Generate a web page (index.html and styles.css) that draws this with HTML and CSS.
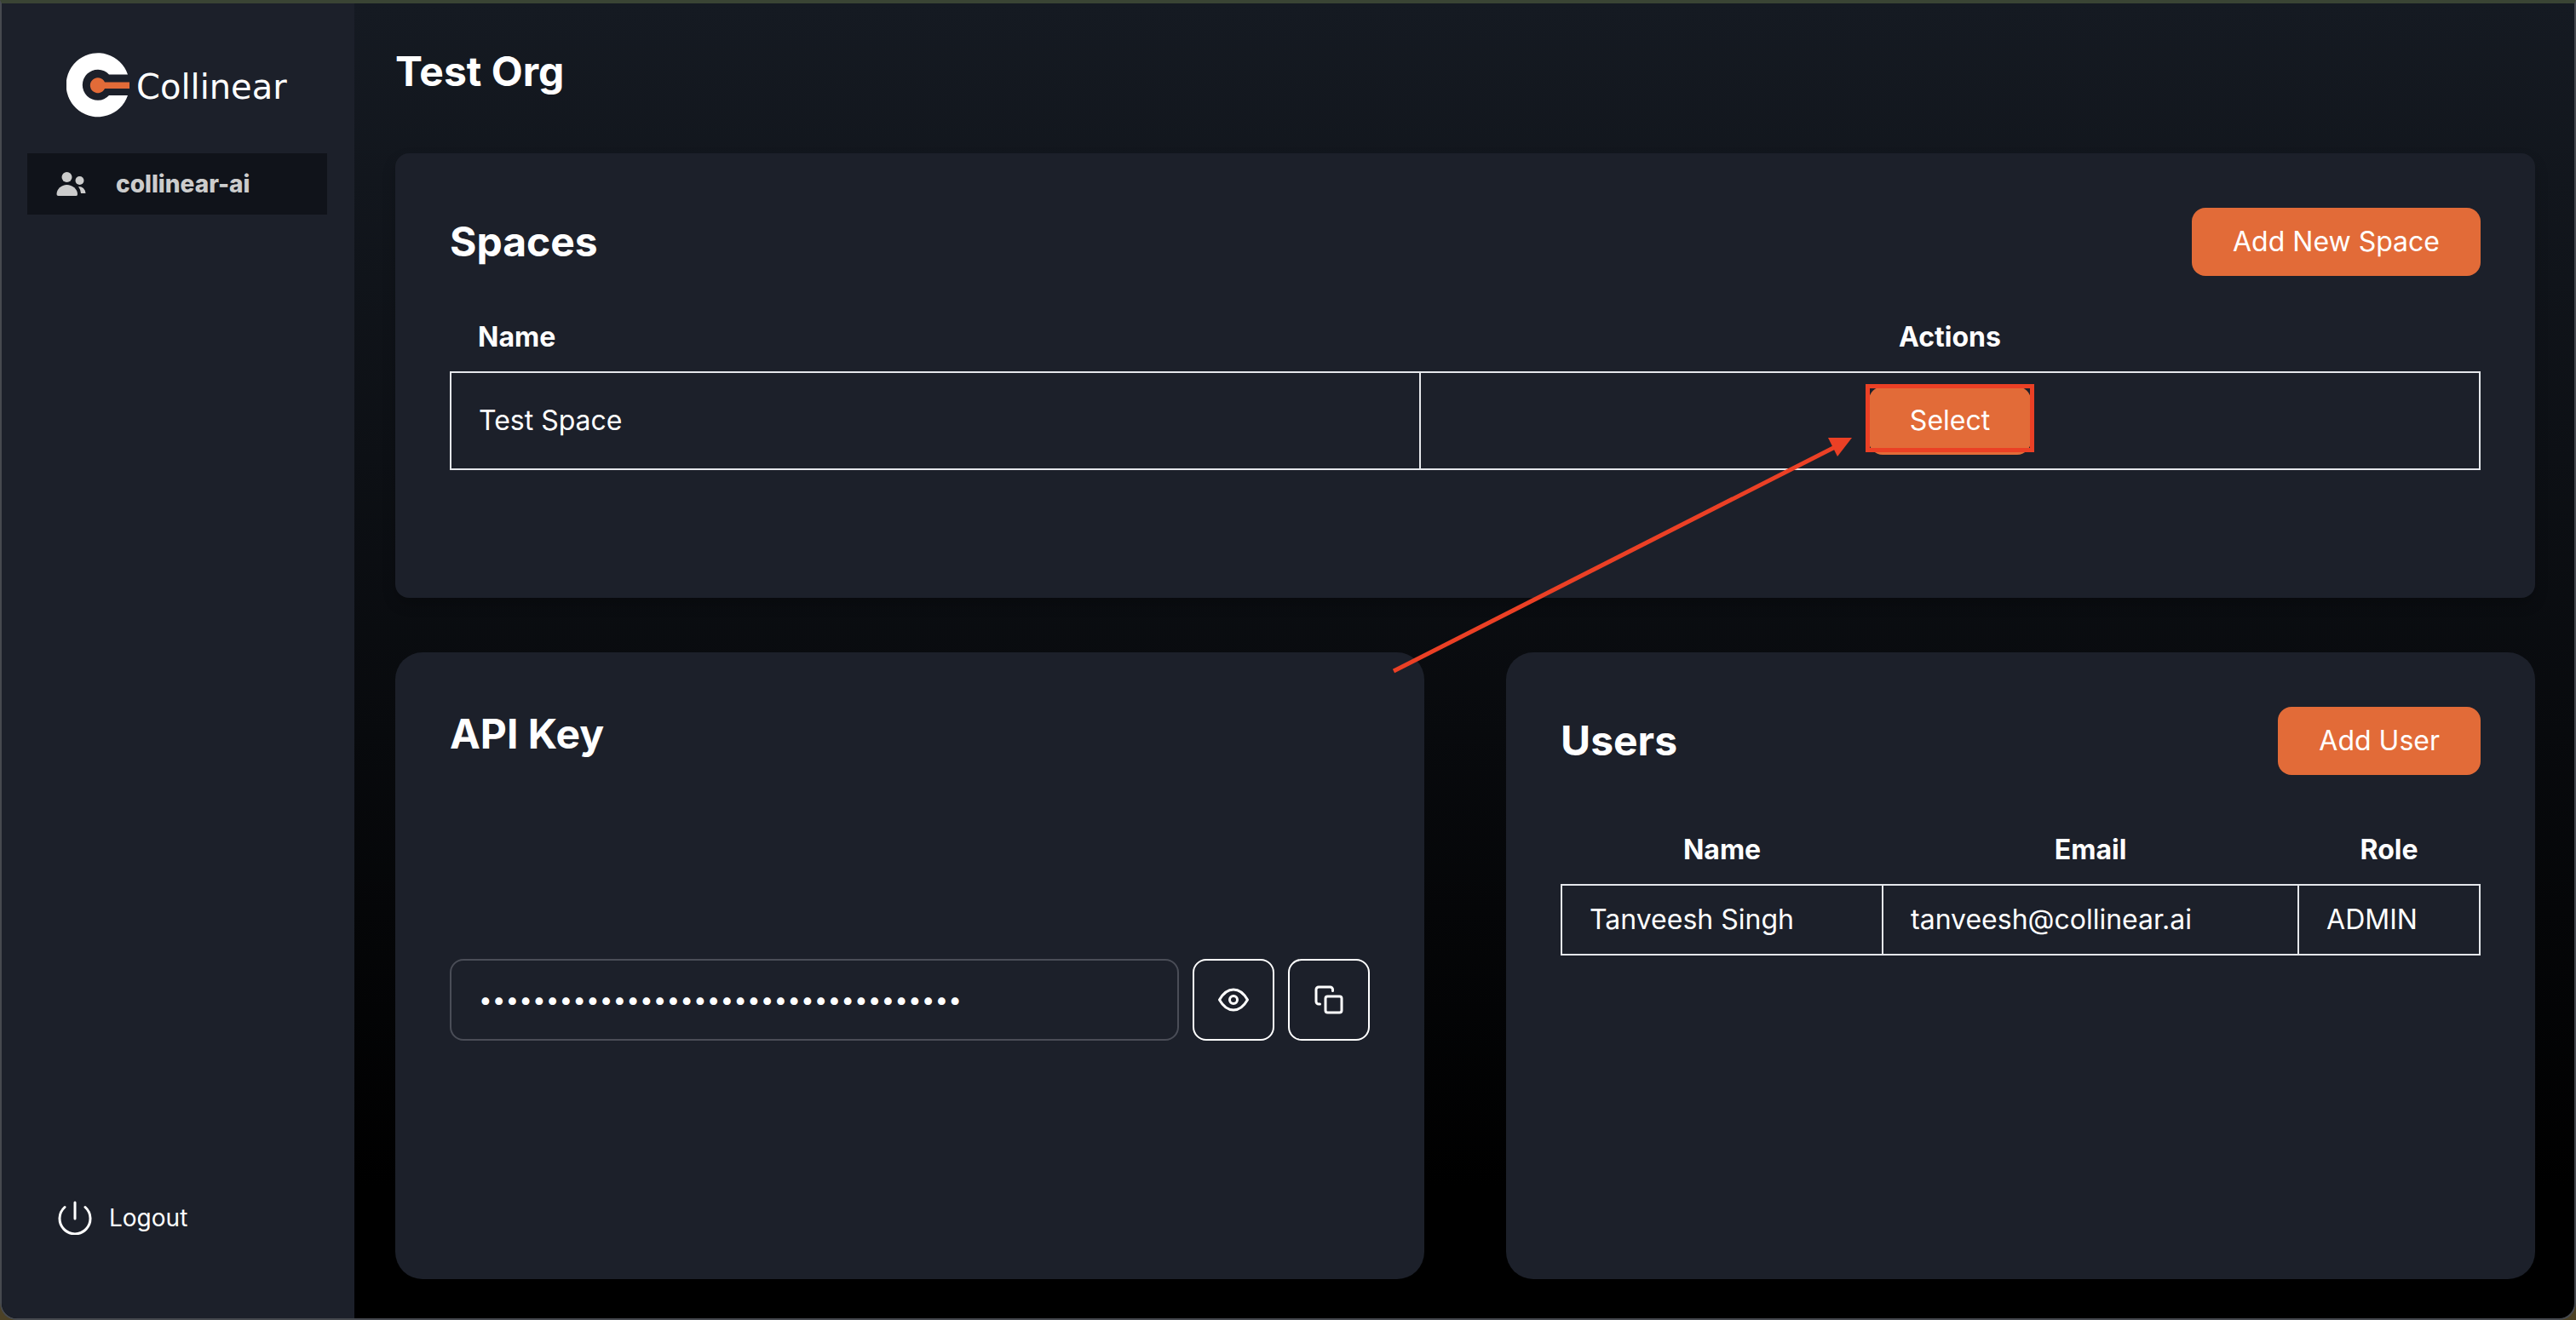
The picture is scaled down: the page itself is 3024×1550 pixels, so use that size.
FILE: index.html
```html
<!DOCTYPE html>
<html lang="en">
<head>
<meta charset="utf-8">
<meta name="viewport" content="width=device-width, initial-scale=1">
<title>Collinear - Test Org</title>
<link rel="stylesheet" href="styles.css">
</head>
<body>
<div class="window">
  <aside class="sidebar">
    <a class="brand" href="#">
      <svg class="brand-mark" viewBox="0 0 76 76" aria-hidden="true">
        <path fill="#fff" d="M72 25.500A37.200 37.500 0 1 0 72 50H50A18 18 0 1 1 50 25.500Z"/>
        <path fill="#e26b38" d="M45 34.500H74V42H45A9 9 0 1 1 45 34.500Z"/>
      </svg>
      <span class="brand-name">Collinear</span>
    </a>
    <nav class="nav">
      <a class="nav-item" href="#">
        <svg class="nav-icon" viewBox="0 0 36 30" fill="currentColor" aria-hidden="true">
          <circle cx="12.500" cy="7" r="6"/>
          <circle cx="27.500" cy="11" r="5"/>
          <path d="M0.500 27C0.500 21 6 16 12.500 16S25 21 25 27Q25 29 23.500 29H2.500Q0.500 29 0.500 27Z"/>
          <path d="M26 18Q33.500 18 34.500 26H29Q28.500 21.500 26 18Z"/>
        </svg>
        <span>collinear-ai</span>
      </a>
    </nav>
    <button class="logout" type="button">
      <svg class="logout-icon" viewBox="0 0 40 40" fill="none" stroke="currentColor" stroke-width="3" stroke-linecap="round" aria-hidden="true">
        <path d="M20 2V21M8 7.500A18 18 0 1 0 32 7.500"/>
      </svg>
      <span>Logout</span>
    </button>
  </aside>

  <main class="content">
    <h1 class="title">Test Org</h1>

    <section class="card card-spaces">
      <header class="card-head">
        <h2 class="title">Spaces</h2>
        <button class="btn" type="button">Add New Space</button>
      </header>
      <table class="table">
        <thead>
          <tr><th class="col-start" scope="col">Name</th><th scope="col">Actions</th></tr>
        </thead>
        <tbody>
          <tr>
            <td>Test Space</td>
            <td class="cell-action">
              <span class="callout">
                <button class="btn" type="button">Select</button>
                <svg class="callout-arrow" viewBox="0 0 540 280" aria-hidden="true">
                  <path d="M2 274L520 11" stroke="#eb4025" stroke-width="5" fill="none"/>
                  <path d="M540 0H512L523 22Z" fill="#eb4025"/>
                </svg>
              </span>
            </td>
          </tr>
        </tbody>
      </table>
    </section>

    <div class="columns">
      <section class="card card-round card-key">
        <h2 class="title">API Key</h2>
        <div class="key-row">
          <input class="key-input" type="password" aria-label="API Key" value="abcdefghijklmnopqrstuvwxyz0123456789" readonly>
          <button class="icon-btn" type="button" aria-label="Show key">
            <svg viewBox="0 0 40 40" aria-hidden="true"><path d="M3.500 20C7.500 13 13 8 20 8S32.500 13 36.500 20C32.500 27 27 32 20 32S7.500 27 3.500 20Z"/><circle cx="20" cy="20" r="4.500"/></svg>
          </button>
          <button class="icon-btn" type="button" aria-label="Copy key">
            <svg viewBox="0 0 40 40" aria-hidden="true"><rect x="16" y="16" width="19" height="19" rx="2.500"/><path d="M9.500 25H8A3 3 0 0 1 5 22V8A3 3 0 0 1 8 5H21.500A3 3 0 0 1 24.500 8V9.500"/></svg>
          </button>
        </div>
      </section>

      <section class="card card-round">
        <header class="card-head card-head-wide">
          <h2 class="title">Users</h2>
          <button class="btn" type="button">Add User</button>
        </header>
        <table class="table">
          <thead>
            <tr><th scope="col">Name</th><th scope="col">Email</th><th scope="col">Role</th></tr>
          </thead>
          <tbody>
            <tr><td>Tanveesh Singh</td><td>tanveesh@collinear.ai</td><td>ADMIN</td></tr>
          </tbody>
        </table>
      </section>
    </div>
  </main>
</div>
</body>
</html>
```
FILE: styles.css
```css
* {
  box-sizing: border-box;
}

html {
  background: #4d4226;
}

body {
  margin: 0;
  color: #fff;
  font-family: Inter, "Liberation Sans", sans-serif;
  font-size: 32px;
  line-height: 48px;
}

button,
input {
  font: inherit;
  color: inherit;
}

a {
  color: inherit;
  text-decoration: none;
}

.window {
  display: flex;
  min-height: 100vh;
  border: 2px solid #46494f;
  border-top: 4px solid #3a4434;
  border-radius: 0 0 20px 20px;
  overflow: hidden;
  background: linear-gradient(#151a22, #000 90%);
}

/* Sidebar */
.sidebar {
  flex: none;
  display: flex;
  flex-direction: column;
  width: 414px;
  padding: 58px 32px 86px 30px;
  background: #1c202a;
}

.brand {
  display: flex;
  align-items: center;
  gap: 6px;
  padding-left: 46px;
}

.brand-mark {
  width: 76px;
  height: 76px;
}

.brand-name {
  padding-top: 4px;
  font-family: "DejaVu Sans", sans-serif;
  font-size: 40px;
}

.nav {
  flex: 1;
  padding-top: 42px;
}

.nav-item {
  display: flex;
  align-items: center;
  gap: 34px;
  height: 72px;
  padding: 0 34px;
  background: #10131a;
  color: #ccc;
  font-size: 28px;
  font-weight: 800;
}

.nav-icon {
  width: 36px;
  height: 30px;
}

.logout {
  display: flex;
  align-items: center;
  gap: 20px;
  padding: 8px 36px;
  border: 0;
  background: none;
  font-size: 28px;
}

.logout-icon {
  width: 40px;
  height: 40px;
}

/* Main column */
.content {
  flex: 1;
  display: flex;
  flex-direction: column;
  min-width: 0;
  padding: 48px 46px 46px 48px;
}

.title {
  margin: 0;
  font-size: 48px;
  font-weight: 700;
  line-height: 64px;
}

.card {
  padding: 64px;
  border-radius: 16px;
  background: #1c202a;
}

.card-spaces {
  min-height: 522px;
  margin-top: 64px;
  box-shadow: 0 8px 16px rgba(0, 0, 0, 0.2);
}

.card-round {
  border-radius: 32px;
}

.card-head {
  display: flex;
  align-items: center;
  justify-content: space-between;
  margin-bottom: 32px;
}

.card-head-wide {
  margin-bottom: 48px;
}

.columns {
  flex: 1;
  display: grid;
  grid-template-columns: 1fr 1fr;
  gap: 96px;
  margin-top: 64px;
}

.btn {
  height: 80px;
  padding: 0 48px;
  border: 0;
  border-radius: 16px;
  background: #e26b38;
}

/* Tables */
.table {
  width: 100%;
  border-collapse: collapse;
}

.table th,
.table td {
  padding: 16px 32px;
}

.table td {
  border: 2px solid #e5e7eb;
}

.table .col-start {
  text-align: left;
}

.table .cell-action {
  text-align: center;
}

/* Highlight frame and pointer over the Select button */
.callout {
  position: relative;
  display: inline-block;
  vertical-align: top;
}

.callout .btn {
  display: block;
}

.callout::after {
  content: "";
  position: absolute;
  inset: -3px -4px 3px;
  border: 5px solid #eb4025;
  pointer-events: none;
}

.callout-arrow {
  position: absolute;
  top: 60px;
  right: calc(100% + 20px);
  width: 540px;
  height: 280px;
  pointer-events: none;
}

/* API key */
.card-key {
  display: flex;
  flex-direction: column;
  gap: 16px;
}

.key-row {
  flex: 1;
  display: flex;
  align-items: center;
  gap: 16px;
}

.key-input {
  flex: 1;
  min-width: 0;
  height: 96px;
  padding: 0 32px;
  border: 2px solid #4a4d57;
  border-radius: 16px;
  background: transparent;
  font-size: 28px;
}

.icon-btn {
  display: grid;
  place-items: center;
  width: 96px;
  height: 96px;
  padding: 0;
  border: 2px solid #fff;
  border-radius: 16px;
  background: transparent;
}

.icon-btn svg {
  width: 40px;
  height: 40px;
  fill: none;
  stroke: currentColor;
  stroke-width: 3;
  stroke-linecap: round;
  stroke-linejoin: round;
}
```
